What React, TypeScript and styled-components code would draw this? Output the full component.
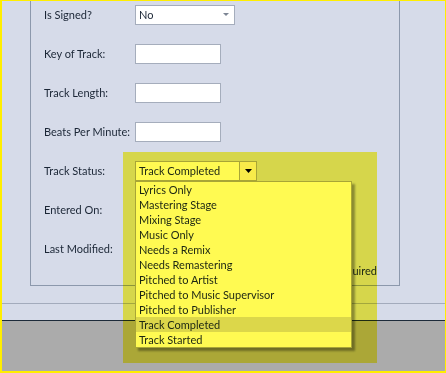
import React from 'react'
import styled, { createGlobalStyle } from 'styled-components'

const GlobalStyle = createGlobalStyle`
    html, body {
        margin: 0;
        padding: 0;
    }
    body {
        font-family: "Lato", "Liberation Sans", sans-serif;
        font-size: 11px;
        color: #1b2636;
    }
`

const Window = styled.div`
    position: relative;
    width: 446px;
    height: 373px;
    box-sizing: border-box;
    border-style: solid;
    border-color: #ffee00;
    border-width: 1px 1px 2px 2px;
    background: #d6dbe9;
    display: flex;
    flex-direction: column;
    overflow: hidden;
`

const Body = styled.div`
    height: 302px;
    border-bottom: 1px solid #a3abbc;
`

const FooterStrip = styled.div`
    height: 16px;
    border-bottom: 1px solid #1d2b3a;
`

const GreyArea = styled.div`
    flex: 1;
    background: #ababab;
`

const GroupBox = styled.div`
    margin-left: 28px;
    width: 370px;
    height: 285px;
    box-sizing: border-box;
    border: 1px solid #8c98ac;
    border-top: none;
    padding-left: 13px;
    display: flex;
    flex-direction: column;
`

const Form = styled.div`
    margin-top: -6px;
    display: flex;
    flex-direction: column;
`

const Row = styled.div`
    height: 39px;
    display: grid;
    grid-template-columns: 91px auto;
    align-items: center;
`

const Label = styled.span`
    white-space: nowrap;
`

const TextBox = styled.div<{ $w?: number }>`
    width: ${(p) => p.$w ?? 86}px;
    height: 20px;
    box-sizing: border-box;
    background: #ffffff;
    border: 1px solid #a5adbc;
`

const ComboWrap = styled.div`
    position: relative;
    width: fit-content;
`

const Combo = styled.div<{ $w: number; $open?: boolean }>`
    width: ${(p) => p.$w}px;
    height: 20px;
    box-sizing: border-box;
    background: #ffffff;
    border: 1px solid ${(p) => (p.$open ? '#a8a8a8' : '#a5adbc')};
    display: flex;
    align-items: center;
`

const ComboText = styled.span`
    flex: 1;
    padding-left: 3px;
    white-space: nowrap;
`

const ArrowButton = styled.div<{ $flat?: boolean }>`
    width: 17px;
    height: 100%;
    display: flex;
    align-items: center;
    justify-content: center;
    box-sizing: border-box;
    border-left: ${(p) => (p.$flat ? 'none' : '1px solid #a8a8a8')};
    background: ${(p) => (p.$flat ? 'transparent' : '#f8f0e6')};
`

const DropList = styled.div`
    position: absolute;
    left: 0;
    top: 20px;
    width: 217px;
    box-sizing: border-box;
    background: #ffffff;
    border: 1px solid #a8a8a8;
    box-shadow: 3px 3px 2px rgba(0, 0, 0, 0.35);
    z-index: 2;
`

const ListItem = styled.div<{ $selected?: boolean }>`
    height: 15px;
    line-height: 15px;
    padding-left: 3px;
    white-space: nowrap;
    background: ${(p) => (p.$selected ? '#dcdce6' : 'transparent')};
`

const Note = styled.div`
    margin-top: -5px;
    padding-right: 22px;
    text-align: right;
    line-height: 15px;
`

const Highlight = styled.div`
    position: absolute;
    left: 121px;
    top: 151px;
    width: 254px;
    height: 211px;
    background: #fffa52;
    mix-blend-mode: multiply;
    pointer-events: none;
    z-index: 5;
`

const Arrow = ({ color, w }: { color: string; w: number }) => (
    <svg width={w} height={Math.ceil(w / 2)} viewBox={`0 0 ${w} ${Math.ceil(w / 2)}`}>
        <polygon points={`0,0 ${w},0 ${w / 2},${Math.ceil(w / 2)}`} fill={color} />
    </svg>
)

const statuses = [
    'Lyrics Only',
    'Mastering Stage',
    'Mixing Stage',
    'Music Only',
    'Needs a Remix',
    'Needs Remastering',
    'Pitched to Artist',
    'Pitched to Music Supervisor',
    'Pitched to Publisher',
    'Track Completed',
    'Track Started',
]

export default function App() {
    const selected = 'Track Completed'
    return (
        <>
            <GlobalStyle />
            <Window>
                <Body>
                    <GroupBox>
                        <Form>
                            <Row>
                                <Label>Is Signed?</Label>
                                <Combo $w={100}>
                                    <ComboText>No</ComboText>
                                    <ArrowButton $flat>
                                        <Arrow color="#7d8594" w={6} />
                                    </ArrowButton>
                                </Combo>
                            </Row>
                            <Row>
                                <Label>Key of Track:</Label>
                                <TextBox />
                            </Row>
                            <Row>
                                <Label>Track Length:</Label>
                                <TextBox />
                            </Row>
                            <Row>
                                <Label>Beats Per Minute:</Label>
                                <TextBox />
                            </Row>
                            <Row>
                                <Label>Track Status:</Label>
                                <ComboWrap>
                                    <Combo $w={122} $open>
                                        <ComboText>{selected}</ComboText>
                                        <ArrowButton>
                                            <Arrow color="#000000" w={7} />
                                        </ArrowButton>
                                    </Combo>
                                    <DropList>
                                        {statuses.map((s) => (
                                            <ListItem key={s} $selected={s === selected}>
                                                {s}
                                            </ListItem>
                                        ))}
                                    </DropList>
                                </ComboWrap>
                            </Row>
                            <Row>
                                <Label>Entered On:</Label>
                                <TextBox $w={110} />
                            </Row>
                            <Row>
                                <Label>Last Modified:</Label>
                                <TextBox $w={110} />
                            </Row>
                        </Form>
                        <Note>* Required</Note>
                    </GroupBox>
                </Body>
                <FooterStrip />
                <GreyArea />
                <Highlight />
            </Window>
        </>
    )
}
